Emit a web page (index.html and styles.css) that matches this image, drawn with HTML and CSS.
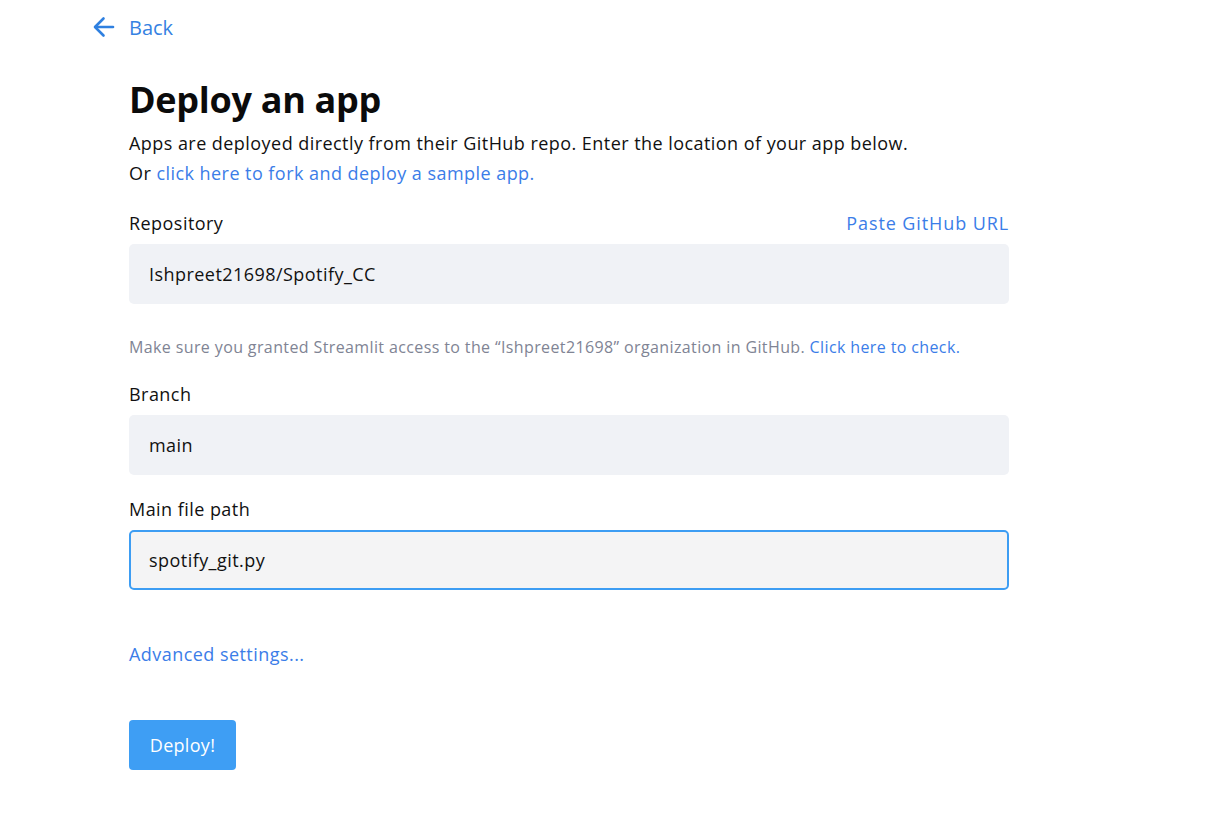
FILE: index.html
```html
<!DOCTYPE html>
<html lang="en">
<head>
<meta charset="utf-8">
<title>Deploy an app</title>
<link rel="stylesheet" href="styles.css">
</head>
<body>
<div class="page">
  <a class="back" href="#">
    <svg class="back-icon" width="24" height="24" viewBox="0 0 24 24" fill="none" stroke="currentColor" stroke-width="2.6" stroke-linecap="round" stroke-linejoin="round"><path d="M21 12H3.5"/><path d="M11.5 3.5L3 12l8.5 8.5"/></svg>
    <span>Back</span>
  </a>
  <main class="content">
    <h1 class="title">Deploy an app</h1>
    <p class="intro intro-first">Apps are deployed directly from their GitHub repo. Enter the location of your app below.</p>
    <p class="intro">Or <a href="#" class="link">click here to fork and deploy a sample app.</a></p>

    <div class="field field-repo">
      <div class="label-row">
        <span class="label">Repository</span>
        <a href="#" class="link">Paste GitHub URL</a>
      </div>
      <div class="input">Ishpreet21698/Spotify_CC</div>
      <p class="help">Make sure you granted Streamlit access to the “Ishpreet21698” organization in GitHub. <a href="#" class="link">Click here to check.</a></p>
    </div>

    <div class="field">
      <div class="label-row"><span class="label">Branch</span></div>
      <div class="input">main</div>
    </div>

    <div class="field">
      <div class="label-row"><span class="label">Main file path</span></div>
      <div class="input input-focus">spotify_git.py</div>
    </div>

    <a href="#" class="link advanced">Advanced settings...</a>

    <button class="deploy" type="button">Deploy!</button>
  </main>
</div>
</body>
</html>
```

FILE: styles.css
```css
* { box-sizing: border-box; }
html, body { margin: 0; padding: 0; background: #ffffff; }
body {
  font-family: "Open Sans", "Noto Sans", sans-serif;
  color: #1a1a1a;
  font-size: 18px;
  letter-spacing: 0.45px;
}
.page { padding: 13px 0 0 93px; }
.back {
  display: inline-flex;
  align-items: center;
  gap: 13px;
  color: #3582e2;
  text-decoration: none;
  font-size: 20px;
  height: 28px;
  letter-spacing: 0;
}
.back-icon { color: #2f80e0; margin-left: -1px; }
.content { width: 880px; margin-left: 36px; display: flex; flex-direction: column; align-items: flex-start; }
.title {
  font-size: 36px;
  font-weight: 700;
  margin: 33px 0 0;
  line-height: 46px;
  color: #0b0b0b;
  letter-spacing: -0.3px;
}
.intro { margin: 0; line-height: 30px; color: #111; }
.intro-first { margin-top: 5px; }
.link { color: #3b7de8; text-decoration: none; }
.field { width: 100%; margin-top: 20px; }
.field-repo { margin-top: 21px; }
.label-row { display: flex; justify-content: space-between; align-items: center; line-height: 28px; height: 28px; }
.label { color: #111; }
.label-row .link { letter-spacing: 0.9px; }
.input {
  margin-top: 7px;
  height: 60px;
  background: #f0f2f6;
  border-radius: 5px;
  padding: 0 20px;
  display: flex;
  align-items: center;
  color: #111;
}
.input-focus { background: #f4f4f5; border: 2px solid #3d9df3; padding: 0 18px; }
.help { margin: 32px 0 0; font-size: 16px; line-height: 22px; color: #808494; letter-spacing: 0.38px; }
.field-repo + .field { margin-top: 22px; }
.advanced { margin-top: 50px; line-height: 28px; }
.deploy {
  margin-top: 52px;
  background: #3e9ef4;
  color: #fff;
  border: none;
  border-radius: 4px;
  font-family: inherit;
  font-size: 18px;
  letter-spacing: 0.3px;
  width: 107px;
  height: 50px;
  padding: 0;
  cursor: pointer;
}
```
